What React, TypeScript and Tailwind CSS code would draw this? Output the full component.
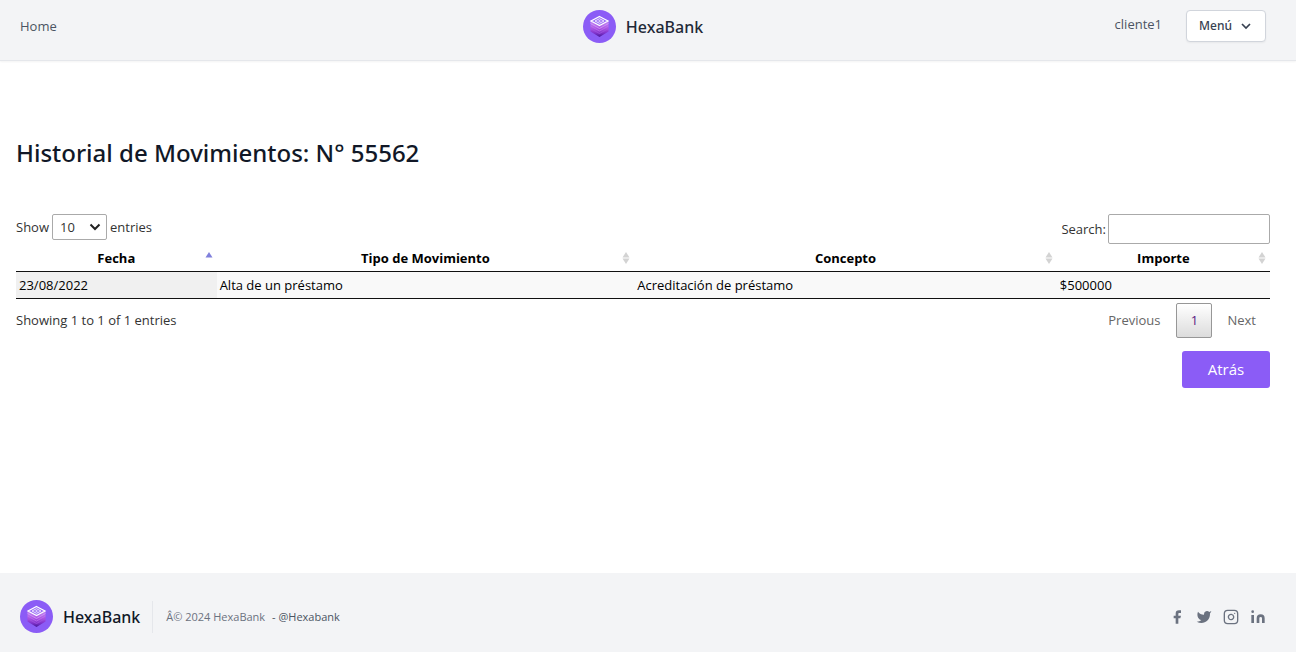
import { useState } from 'react';

function Logo() {
  return (
    <svg viewBox="0 0 33 33" className="size-[33px] shrink-0" aria-hidden="true">
      <defs>
        <linearGradient id="cube" x1="0" y1="0" x2="0" y2="1">
          <stop offset="0" stopColor="#c58af5" />
          <stop offset="0.45" stopColor="#ac55e4" />
          <stop offset="0.75" stopColor="#8233cc" />
          <stop offset="1" stopColor="#47189a" />
        </linearGradient>
      </defs>
      <circle cx="16.5" cy="16.5" r="16.5" fill="#8b5cf6" />
      <path d="M7.5 11V21.5L16.5 27 25.5 21.5V11L16.5 16Z" fill="url(#cube)" />
      <path d="M7.5 13.5 16.5 18.5 25.5 13.5" fill="none" stroke="#cf9af8" strokeWidth="0.8" />
      <path d="M7.5 16 16.5 21 25.5 16" fill="none" stroke="#bd74ee" strokeWidth="0.7" />
      <path d="M7.5 18.5 16.5 23.5 25.5 18.5" fill="none" stroke="#a358e0" strokeWidth="0.7" />
      <path d="M16.5 6.5 25 11 16.5 15.5 8 11Z" fill="#9b70f5" stroke="#fff" strokeWidth="1.2" />
      <path d="M12 11 16.5 8.7 21 11 16.5 13.3Z" fill="none" stroke="#f3ebff" strokeWidth="0.9" />
      <path d="M15 11 16.5 10.2 18 11 16.5 11.8Z" fill="#fff" />
    </svg>
  );
}

function SortArrows({ active = false }: { active?: boolean }) {
  return (
    <svg viewBox="0 0 8 14" className="h-3.5 w-2 shrink-0" aria-hidden="true">
      <path d="M4 1 7.5 6.5H.5Z" fill={active ? '#8080dc' : '#d3d3d3'} />
      {!active && <path d="M4 13 7.5 7.5H.5Z" fill="#d3d3d3" />}
    </svg>
  );
}

const columns = [
  { name: 'Fecha', width: 'w-[16%]' },
  { name: 'Tipo de Movimiento', width: 'w-[33.3%]' },
  { name: 'Concepto', width: 'w-[33.7%]' },
  { name: 'Importe', width: 'w-[17%]' },
];

const rows = [['23/08/2022', 'Alta de un préstamo', 'Acreditación de préstamo', '$500000']];

export default function App() {
  const [search, setSearch] = useState('');
  return (
    <div className="flex min-h-screen flex-col bg-white font-['Open_Sans','Noto_Sans',sans-serif] text-[13px] leading-5 text-[#333]">
      <header className="grid grid-cols-3 items-center border-b border-gray-200 bg-[#f3f4f6] pt-2.5 pr-[30px] pb-[17px] pl-5 shadow-xs">
        <nav className="pb-0.5">
          <a href="#home" className="text-[#4b5563]">Home</a>
        </nav>
        <a href="#inicio" className="flex items-center justify-center gap-2.5 font-['Noto_Sans',sans-serif] text-base font-medium text-[#1f2937]">
          <Logo />
          HexaBank
        </a>
        <div className="flex items-center justify-end gap-6 pb-px">
          <span className="pb-1 text-[#4b5563]">cliente1</span>
          <button type="button" className="flex h-8 items-center gap-[7px] rounded border border-gray-300 bg-white px-3 font-['Noto_Sans',sans-serif] text-[12px] font-medium text-[#374151] shadow-xs">
            Menú
            <svg viewBox="0 0 14 14" className="size-3.5" fill="none" stroke="currentColor" strokeWidth="1.7" aria-hidden="true">
              <path d="m3 5 4 4 4-4" />
            </svg>
          </button>
        </div>
      </header>

      <main className="grow pt-[74px] pr-[26px] pb-10 pl-4">
        <h1 className="font-['Noto_Sans',sans-serif] text-2xl leading-9 font-medium text-[#111827]">Historial de Movimientos: N° 55562</h1>

        <div className="mt-[43px] flex items-start justify-between">
          <label className="flex items-center gap-[3px]">
            Show
            <span className="relative flex">
              <select className="h-[26px] w-[55px] appearance-none rounded-xs border border-[#aaa] bg-white pl-[7px]">
                <option>10</option>
                <option>25</option>
                <option>50</option>
                <option>100</option>
              </select>
              <svg viewBox="0 0 12 12" className="pointer-events-none absolute top-[7px] right-1.5 size-3" fill="none" stroke="#222" strokeWidth="2" aria-hidden="true">
                <path d="m1.5 3.5 4.5 4.5 4.5-4.5" />
              </svg>
            </span>
            entries
          </label>
          <label className="flex items-center gap-0.5">
            Search:
            <input type="search" value={search} onChange={(e) => setSearch(e.target.value)} className="h-[30px] w-[162px] rounded-xs border border-[#aaa] bg-white px-1" />
          </label>
        </div>

        <table className="w-full table-fixed border-collapse text-black">
          <thead>
            <tr className="border-b border-[#111]">
              {columns.map((c, i) => (
                <th key={c.name} className={`${c.width} h-[27px] p-0 pt-px pr-1 font-bold`}>
                  <span className="flex items-center">
                    <span className="grow pl-3 text-center">{c.name}</span>
                    <SortArrows active={i === 0} />
                  </span>
                </th>
              ))}
            </tr>
          </thead>
          <tbody>
            {rows.map((row) => (
              <tr key={row[0]} className="border-b border-[#111] bg-[#f9f9f9]">
                {row.map((cell) => (
                  <td key={cell} className="h-[27px] px-[3px] py-0 first:bg-[#f0f0f0]">{cell}</td>
                ))}
              </tr>
            ))}
          </tbody>
        </table>

        <div className="flex items-center justify-between pt-1">
          <p>Showing 1 to 1 of 1 entries</p>
          <div className="flex h-[35px] items-center text-[#666]">
            <button type="button" className="px-4">Previous</button>
            <button type="button" className="h-[35px] w-9 rounded-xs border border-[#979797] bg-linear-to-b from-white to-[#dcdcdc] text-[#5b2182]">1</button>
            <button type="button" className="pr-3.5 pl-[15px]">Next</button>
          </div>
        </div>

        <div className="flex justify-end pt-[13px]">
          <button type="button" className="h-[37px] w-[88px] rounded-[3px] bg-[#8b5cf6] text-[15px] text-white">Atrás</button>
        </div>
      </main>

      <footer className="flex flex-wrap items-center bg-[#f3f4f6] pt-[27px] pr-[30px] pb-[19px] pl-5">
        <a href="#inicio" className="flex items-center gap-2.5 font-['Noto_Sans',sans-serif] text-base font-medium text-[#111827]">
          <Logo />
          HexaBank
        </a>
        <p className="ml-3 border-l border-gray-200 py-1.5 pl-[13px] text-[11px] text-[#6b7280]">
          Â© 2024 HexaBank <a href="#hexabank" className="ml-1 text-[#4b5563]">- @Hexabank</a>
        </p>
        <div className="ml-auto flex gap-[11px] text-[#6b7280]">
          <a href="#facebook" aria-label="Facebook">
            <svg fill="currentColor" className="size-4" viewBox="0 0 24 24">
              <path d="M18 2h-3a5 5 0 00-5 5v3H7v4h3v8h4v-8h3l1-4h-4V7a1 1 0 011-1h3z" />
            </svg>
          </a>
          <a href="#twitter" aria-label="Twitter">
            <svg fill="currentColor" className="size-4" viewBox="0 0 24 24">
              <path d="M23 3a10.9 10.9 0 01-3.14 1.53 4.48 4.48 0 00-7.86 3v1A10.66 10.66 0 013 4s-4 9 5 13a11.64 11.64 0 01-7 2c9 5 20 0 20-11.5a4.5 4.5 0 00-.08-.83A7.72 7.72 0 0023 3z" />
            </svg>
          </a>
          <a href="#instagram" aria-label="Instagram">
            <svg fill="none" stroke="currentColor" strokeLinecap="round" strokeLinejoin="round" strokeWidth="2" className="size-4" viewBox="0 0 24 24">
              <rect width="20" height="20" x="2" y="2" rx="5" ry="5" />
              <path d="M16 11.37A4 4 0 1112.63 8 4 4 0 0116 11.37zm1.5-4.87h.01" />
            </svg>
          </a>
          <a href="#linkedin" aria-label="LinkedIn">
            <svg fill="currentColor" className="size-4" viewBox="0 0 24 24">
              <path d="M16 8a6 6 0 016 6v7h-4v-7a2 2 0 00-2-2 2 2 0 00-2 2v7h-4v-7a6 6 0 016-6zM2 9h4v12H2z" />
              <circle cx="4" cy="4" r="2" />
            </svg>
          </a>
        </div>
      </footer>
    </div>
  );
}
